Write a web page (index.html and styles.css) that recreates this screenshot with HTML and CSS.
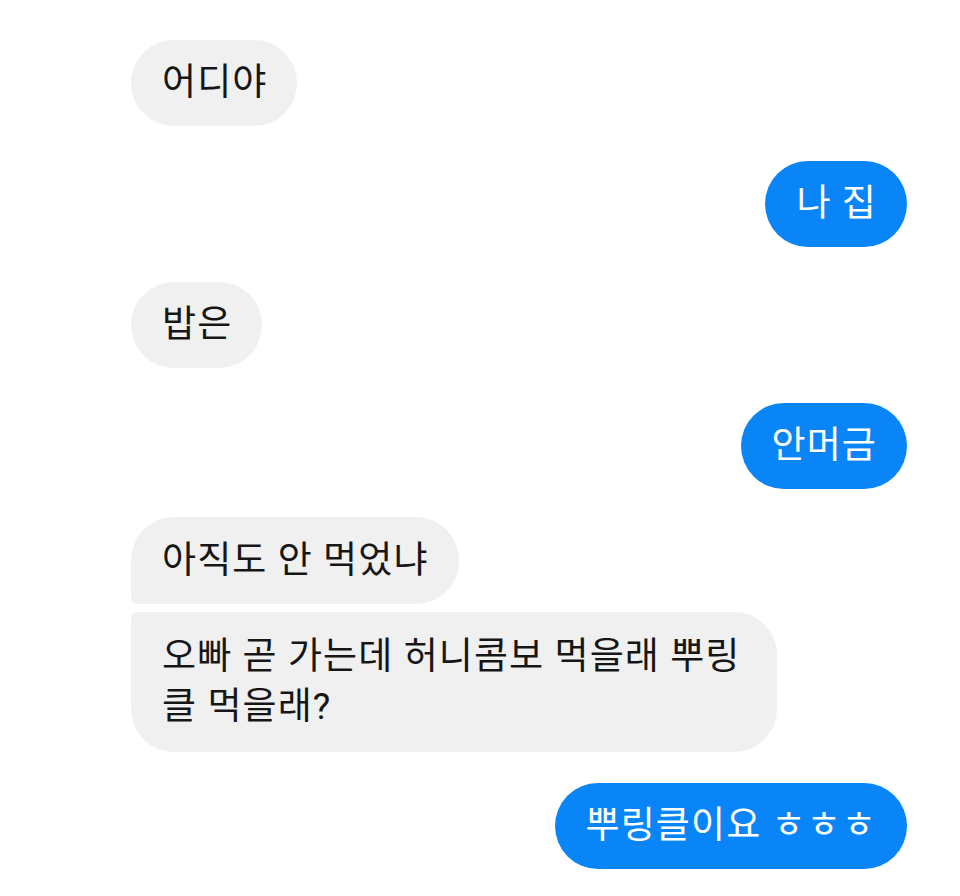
FILE: index.html
```html
<!DOCTYPE html>
<html lang="ko">
<head>
  <meta charset="UTF-8" />
  <meta name="viewport" content="width=device-width, initial-scale=1.0" />
  <title>Chat</title>
  <link rel="stylesheet" href="styles.css">
</head>
<body>
  <div class="chat">
    <div class="msg in">어디야</div>
    <div class="msg out">나 집</div>
    <div class="msg in">밥은</div>
    <div class="msg out">안머금</div>
    <div class="group">
      <div class="msg in first">아직도 안 먹었냐</div>
      <div class="msg in last wide">오빠 곧 가는데 허니콤보 먹을래 뿌링클 먹을래?</div>
    </div>
    <div class="msg out">뿌링클이요 ㅎㅎㅎ</div>
  </div>
</body>
</html>
```

FILE: styles.css
```css
:root {
  --blue: #0a85f8;
  --grey: #f0f0f0;
  --text: #161616;
}
* {
  box-sizing: border-box;
  margin: 0;
  padding: 0;
}
body {
  background: #fff;
  font-family: Roboto, "Noto Sans CJK KR", sans-serif;
}
.chat {
  display: flex;
  flex-direction: column;
  gap: 35px;
  padding: 40px 53px 0 131px;
}
.group {
  display: flex;
  flex-direction: column;
  gap: 8px;
  margin: -7px 0 -4px;
}
.msg {
  font-size: 37px;
  letter-spacing: 1.1px;
  line-height: 50px;
  padding: 18px 30px 18px 31px;
  border-radius: 43px;
  max-width: 646px;
}
.in {
  align-self: flex-start;
  background: var(--grey);
  color: var(--text);
}
.out {
  align-self: flex-end;
  background: var(--blue);
  color: #fff;
}
.first {
  border-bottom-left-radius: 6px;
  padding-top: 19px;
}
.last {
  border-top-left-radius: 6px;
  padding-top: 20px;
  padding-bottom: 20px;
}
.wide {
  width: 646px;
  padding-right: 26px;
}
```
